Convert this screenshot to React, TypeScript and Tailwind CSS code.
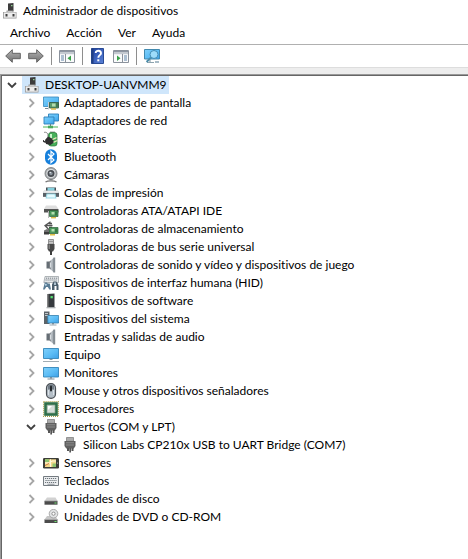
import { useState, type ReactNode } from "react";

function Icon({ children }: { children: ReactNode }) {
  return (
    <svg viewBox="0 0 16 16" className="block size-4 shrink-0" aria-hidden="true">
      {children}
    </svg>
  );
}

function Defs() {
  return (
    <svg className="absolute size-0" aria-hidden="true">
      <defs>
        <linearGradient id="screen" x1="0" y1="0" x2="1" y2="1">
          <stop offset="0" stopColor="#7fd0fb" />
          <stop offset="0.55" stopColor="#5bbcf5" />
          <stop offset="1" stopColor="#3d9fe6" />
        </linearGradient>
        <linearGradient id="arrow" x1="0" y1="0" x2="0" y2="1">
          <stop offset="0" stopColor="#b4b4b4" />
          <stop offset="1" stopColor="#707070" />
        </linearGradient>
        <linearGradient id="metal" x1="0" y1="0" x2="1" y2="0">
          <stop offset="0" stopColor="#5c6268" />
          <stop offset="0.5" stopColor="#c3cad0" />
          <stop offset="1" stopColor="#7b838a" />
        </linearGradient>
        <linearGradient id="help" x1="0" y1="0" x2="1" y2="1">
          <stop offset="0" stopColor="#1c3fa0" />
          <stop offset="1" stopColor="#5c84d8" />
        </linearGradient>
      </defs>
    </svg>
  );
}

const ComputerRoot = () => (
  <Icon>
    <path d="M5 .6L10.500 0v8H5z" fill="#3c3c3c" />
    <path d="M8 2h1.500v1.200H8z" fill="#8fcf8f" />
    <path d="M0 9h3.500V7.500h7V9h3v6.500H0z" fill="#9a9a9a" />
    <path d="M.8 9.500h12v5.200H.8z" fill="#ececec" />
    <path d="M2.500 11h2v2.500h-2zM9.500 11h2v2.500h-2z" fill="#3e3e3e" />
    <path d="M4.500 8h5v1.500h-5z" fill="#c8c8c8" />
  </Icon>
);

const DisplayAdapter = () => (
  <Icon>
    <path d="M.5 2h15v9.500H.5z" fill="url(#screen)" stroke="#3586bb" strokeWidth=".8" />
    <path d="M2 13h4v1H2z" fill="#7b8790" />
    <path d="M6.500 7.500h9v5.500h-9z" fill="#5d9a6c" stroke="#31573b" strokeWidth=".8" />
    <path d="M9 8.500h3.500v3H9z" fill="#b3dcae" />
    <path d="M13.500 8h1v4h-1z" fill="#285c38" />
    <path d="M8 13.300h5v1.400H8z" fill="#d7b43c" />
    <path d="M5.500 7v7.500" stroke="#c8cfd3" />
  </Icon>
);

const NetworkAdapter = () => (
  <Icon>
    <path d="M5.500 1h10v7h-10z" fill="url(#screen)" stroke="#2c80b9" strokeWidth=".9" />
    <path d="M1 4h10v7H1z" fill="url(#screen)" stroke="#2c80b9" strokeWidth=".9" />
    <path d="M7.500 11v2.500" stroke="#6d7f8a" />
    <path d="M0 14h15" stroke="#7fcb86" strokeWidth="1.400" />
    <path d="M5 12.700h5v2.600H5z" fill="#4bab5d" />
  </Icon>
);

const Battery = () => (
  <Icon>
    <path d="M1 1.500c2-1 5 1 3.500 4" fill="none" stroke="#777" strokeWidth=".9" />
    <path d="M7 .3h5v2H7z" fill="#b9bdb9" />
    <rect x="5.500" y="1.500" width="8.500" height="13.500" rx="2.500" fill="#46b05a" stroke="#297238" strokeWidth=".7" />
    <path d="M8 3v5" stroke="#c8f3c8" strokeWidth="2" />
    <path d="M2 9l3-3.500 5 2.500 1 3.500L7.500 14 3 13z" fill="#303030" />
    <path d="M9.500 8.500l4-1.800M10.500 11.300l4-1.800" stroke="#ece8bd" strokeWidth="1.300" />
    <path d="M0 9c0 2 2 2 3 2" fill="none" stroke="#303030" strokeWidth="1.300" />
  </Icon>
);

const Bluetooth = () => (
  <Icon>
    <rect x="2" y=".2" width="12" height="15.600" rx="6" fill="#1680dc" />
    <path d="M5 5l6 6-3 2.700V2.300L11 5l-6 6" fill="none" stroke="#fff" strokeWidth="1.200" />
  </Icon>
);

const Camera = () => (
  <Icon>
    <path d="M2.500 15c2-1.500 9-1.500 11 0" fill="none" stroke="#777" strokeWidth="1.200" />
    <path d="M6.500 12h3v2h-3z" fill="#9a9a9a" />
    <circle cx="8" cy="6.500" r="6" fill="#a9adaf" stroke="#707476" strokeWidth=".8" />
    <circle cx="8" cy="6.500" r="4.500" fill="#dde0e2" />
    <circle cx="8" cy="6.500" r="3.500" fill="#484c52" />
    <circle cx="8" cy="6.500" r="1.700" fill="#8a939c" />
    <circle cx="7.200" cy="5.500" r=".8" fill="#e4e9ed" />
  </Icon>
);

const Printer = () => (
  <Icon>
    <path d="M3 2.500h10V7H3z" fill="#454c52" />
    <path d="M4.500 2.800h7V6h-7z" fill="#86cfdc" />
    <path d="M1 5.500h14l1 2.500v4H0V8z" fill="#c5c9cc" />
    <path d="M0 8h16v3.800H0z" fill="#596066" />
    <path d="M1 6h14l.5 1.700H.5z" fill="#e9ebec" />
    <path d="M3.500 8.500h9l1 5h-11z" fill="#9edae6" />
    <path d="M4.500 9.500h7l.6 3H3.900z" fill="#e6fafd" />
  </Icon>
);

const AtaController = () => (
  <Icon>
    <path d="M3 2.500h10l2.500 3.500H1z" fill="#dedede" />
    <path d="M1 6h14.500v3.500H1z" fill="#545454" />
    <path d="M5.500 8v7" stroke="#bbb" />
    <path d="M6.500 7.500H15v6H6.500z" fill="#4c995d" stroke="#2b5e37" strokeWidth=".7" />
    <path d="M8.500 9h3v2.500h-3z" fill="#b5e0b0" />
    <path d="M13 8.500v4" stroke="#235831" />
    <path d="M8 14h5v1.400H8z" fill="#dabb4a" />
  </Icon>
);

const StorageController = () => (
  <Icon>
    <path d="M7.500.7L2 4.500l4 4.200M3 4.500h6.500M6 2.500h3M6 6.500h3" fill="none" stroke="#555" strokeWidth="1.300" />
    <path d="M1 9.500l3-1.500 3 1.500v3.500H1z" fill="#707070" />
    <path d="M1 11h5v2.500H1z" fill="#3d3d3d" />
    <path d="M6.500 6.500H15v6H6.500z" fill="#4c995d" stroke="#2b5e37" strokeWidth=".7" />
    <path d="M8.500 8h3v2.500h-3z" fill="#b5e0b0" />
    <path d="M13 7.500v4" stroke="#235831" />
    <path d="M7 13h5v1.500H7z" fill="#e0c046" />
  </Icon>
);

const UsbPlug = () => (
  <Icon>
    <path d="M5.500.5h5V5h-5z" fill="#d8d8d8" stroke="#7b7b7b" strokeWidth=".8" />
    <path d="M6.500 1.700h1v1.500h-1zM8.500 1.700h1v1.500h-1z" fill="#555" />
    <path d="M4.500 5h7v5L10 12.500H6L4.500 10z" fill="#484848" />
    <path d="M5.500 5.500H7v4.500H5.500z" fill="#7c7c7c" />
    <path d="M7 12h2v4H7z" fill="#3d3d3d" />
  </Icon>
);

const Speaker = () => (
  <Icon>
    <path d="M3.500 4.500h3.200v7H3.500z" fill="#666e75" />
    <path d="M6.500 4.500L11 .5v15l-4.500-4z" fill="url(#metal)" />
    <path d="M10.500.5h1.700v15h-1.700z" fill="#848c93" />
    <path d="M7.500 5.500v5" stroke="#d7dce0" />
  </Icon>
);

const Hid = () => (
  <Icon>
    <path d="M2 1.500h13.500v6H.8z" fill="#e3e6e8" stroke="#858b90" strokeWidth=".6" />
    <path d="M3 3.200h11.500M2.500 5h12" stroke="#7b8288" strokeDasharray="1.200 .8" />
    <path d="M0 14.500L1.800 7.500h2l1 1h2L8 14.500H6.300L4.800 12H3.200L1.700 14.500z" fill="#5a7c94" />
    <circle cx="2.800" cy="9.800" r="1" fill="#b8d3e4" />
    <path d="M9 15V9.500l1.500-3h3L15.500 10v5h-2v-4h-2v4z" fill="#4a5d6c" />
    <path d="M11 7.500h2V10h-2z" fill="#aec1ce" />
  </Icon>
);

const SoftwareDevice = () => (
  <Icon>
    <path d="M4.500 1l7-.5v14h-7z" fill="#363a3e" />
    <path d="M4.500 1h1.200v13.500H4.500z" fill="#6c6c6c" />
    <path d="M7.500 3h2.300v2.300H7.500z" fill="#55e071" />
    <path d="M3.500 14h9v1.300h-9z" fill="#a9adaf" />
  </Icon>
);

const SystemDevice = () => (
  <Icon>
    <path d="M1 .5h5.500V13H1z" fill="#5b6369" />
    <path d="M2 2.500h3M2 4.500h3" stroke="#c0c8cd" />
    <path d="M4.800 4.500h10.800v7.500H4.800z" fill="url(#screen)" stroke="#337fad" strokeWidth=".8" />
    <path d="M9 12.300h2v1.200H9z" fill="#6a7b86" />
    <path d="M6.500 14h7" stroke="#a9b6be" strokeWidth="1.200" />
  </Icon>
);

const Computer = () => (
  <Icon>
    <path d="M.5 1.500h15v10H.5z" fill="url(#screen)" stroke="#3386b9" strokeWidth=".9" />
    <path d="M6.500 12h3v1h-3z" fill="#8b9aa3" />
    <path d="M0 14.500h16" stroke="#a2adb3" />
  </Icon>
);

const Monitor = () => (
  <Icon>
    <path d="M.5 2.500h15v9.500H.5z" fill="url(#screen)" stroke="#3386b9" strokeWidth=".9" />
    <path d="M7 12.300h2v1.200H7z" fill="#6d7e88" />
    <path d="M4.500 14h7" stroke="#7e8d96" />
  </Icon>
);

const Mouse = () => (
  <Icon>
    <rect x="3.500" y=".6" width="9" height="14.800" rx="4.400" fill="#b4bec7" stroke="#4b5056" strokeWidth="1.200" />
    <path d="M5 2.500c1-1 5-1 6 0v4H5z" fill="#727c86" />
    <path d="M5.500 7v5M10.500 7v5" stroke="#dbe2e8" />
    <rect x="7" y="2.500" width="2" height="6" rx="1" fill="#25292d" />
  </Icon>
);

const Cpu = () => (
  <Icon>
    <path d="M.6.6h14.800v14.800H.6z" fill="none" stroke="#a89d48" strokeWidth="1.200" strokeDasharray="1 1" />
    <path d="M1.200 1.200h13.600v13.600H1.200z" fill="#2f704a" />
    <path d="M4 4h8v8H4z" fill="#d5ddd8" stroke="#84a18e" strokeWidth=".7" />
    <path d="M5 5h4L5 9z" fill="#fff" />
  </Icon>
);

const Port = () => (
  <Icon>
    <path d="M4.500.5h7V4h-7z" fill="#d0d0d0" stroke="#707070" strokeWidth=".7" />
    <path d="M6 1v2.500M8 1v2.500M10 1v2.500" stroke="#777" strokeWidth=".8" />
    <path d="M2.500 4h11v5l-1.700 2.500H4.200L2.500 9z" fill="#606060" />
    <path d="M4 5.800h8M4 8h8" stroke="#9a9a9a" strokeWidth=".8" />
    <path d="M5 11h2v3H5zM7.300 11H9v4.500H7.300zM9.500 11h2v3h-2z" fill="#555" />
  </Icon>
);

const Sensor = () => (
  <Icon>
    <rect y="3" width="16" height="10.500" rx="1.200" fill="#3c3d38" />
    <path d="M2 4.300h11V12H2z" fill="#f3d98b" />
    <path d="M2 4.300h4V7H2zM9.500 8.500H13V12H9.500z" fill="#8dc36e" />
    <path d="M2 8h5l2-2h4M7.500 4.300V12" fill="none" stroke="#fff9df" />
    <path d="M2 10.500l4-2" stroke="#d07b43" />
    <circle cx="14.500" cy="8" r=".6" fill="#ccc" />
  </Icon>
);

const Keyboard = () => (
  <Icon>
    <path d="M.5 3.500h15v9H.5z" fill="#eceef0" stroke="#747b81" />
    <path d="M2 5.500h12M2.500 7.500h11M2 9.500h12" stroke="#6d757b" strokeDasharray="1.200 .8" />
    <path d="M4.500 11.300h7" stroke="#80878c" strokeWidth=".8" />
  </Icon>
);

const Disk = () => (
  <Icon>
    <path d="M4 6.500h8.500l2 3.500h-13z" fill="#d2d2d2" />
    <path d="M1.500 10h13v3.700h-13z" fill="#4c4c4c" />
    <path d="M1.500 10h13" stroke="#999" strokeWidth=".7" />
    <path d="M11.500 11.500h2v1h-2z" fill="#6ce56c" />
  </Icon>
);

const Optical = () => (
  <Icon>
    <path d="M4 7h8.500l2 3.500h-13z" fill="#c6c6c6" />
    <circle cx="10.500" cy="4.700" r="4.300" fill="#e2e4e5" stroke="#999" strokeWidth=".8" />
    <circle cx="10.500" cy="4.700" r="1.600" fill="#fff" stroke="#888" strokeWidth=".9" />
    <path d="M1.500 10.500h13v3.500h-13z" fill="#4c4c4c" />
    <path d="M1.500 10.500h13" stroke="#aaa" strokeWidth=".8" />
    <path d="M11.500 12h2v1h-2z" fill="#6ce56c" />
  </Icon>
);

const Back = () => (
  <Icon>
    <path d="M.7 8l6.600-6.300v3.600h8v5.400h-8v3.600z" fill="url(#arrow)" stroke="#636363" strokeLinejoin="round" />
  </Icon>
);

const Forward = () => (
  <Icon>
    <path d="M15.300 8L8.700 1.700v3.600h-8v5.400h8v3.600z" fill="url(#arrow)" stroke="#636363" strokeLinejoin="round" />
  </Icon>
);

const ConsoleTree = () => (
  <Icon>
    <path d="M.5 2.500h15v12H.5z" fill="#fafbfc" stroke="#8b929c" />
    <path d="M1 3h14v1.500H1z" fill="#8e96a3" />
    <path d="M1 5.700h14" stroke="#b7bdc7" />
    <path d="M6.500 6v8" stroke="#8b929c" />
    <path d="M2 8h3M2 10h3M2 12h3" stroke="#6184a8" />
    <path d="M12 7.500V13L8.500 10.200z" fill="#36a047" />
  </Icon>
);

const ActionPane = () => (
  <Icon>
    <path d="M.5 2.500h15v12H.5z" fill="#fafbfc" stroke="#8b929c" />
    <path d="M1 3h14v1.500H1z" fill="#8e96a3" />
    <path d="M1 5.700h14" stroke="#b7bdc7" />
    <path d="M9.500 6v8" stroke="#8b929c" />
    <path d="M11 8h3M11 10h3M11 12h3" stroke="#6184a8" />
    <path d="M4 7.500V13l3.500-2.800z" fill="#36a047" />
  </Icon>
);

const Help = () => (
  <Icon>
    <path d="M1.500.5h12v15h-12z" fill="url(#help)" stroke="#294b96" />
    <path d="M1.500.5h2v15h-2z" fill="#213f83" />
    <path d="M5.700 5c0-3 5.300-3 5.300.2C11 7.300 8.300 7 8.300 9.800" fill="none" stroke="#fff" strokeWidth="1.900" />
    <path d="M7.300 11.300h2v2h-2z" fill="#fff" />
  </Icon>
);

const Scan = () => (
  <Icon>
    <path d="M.5 1.500h15V11H.5z" fill="url(#screen)" stroke="#4289ae" />
    <path d="M3 14.500h7M6 11.500v3" stroke="#8da3ae" strokeWidth="1.200" />
    <path d="M7 9.500L2.500 14" stroke="#4b8ca9" strokeWidth="1.800" />
    <circle cx="10" cy="6.500" r="4" fill="#a9e2fa" fillOpacity=".85" stroke="#438db5" />
    <path d="M11 14h4" stroke="#8ba5b4" strokeWidth="1.500" />
  </Icon>
);

type Device = { name: string; icon: () => ReactNode; children?: string[] };

const devices: Device[] = [
  { name: "Adaptadores de pantalla", icon: DisplayAdapter },
  { name: "Adaptadores de red", icon: NetworkAdapter },
  { name: "Baterías", icon: Battery },
  { name: "Bluetooth", icon: Bluetooth },
  { name: "Cámaras", icon: Camera },
  { name: "Colas de impresión", icon: Printer },
  { name: "Controladoras ATA/ATAPI IDE", icon: AtaController },
  { name: "Controladoras de almacenamiento", icon: StorageController },
  { name: "Controladoras de bus serie universal", icon: UsbPlug },
  { name: "Controladoras de sonido y vídeo y dispositivos de juego", icon: Speaker },
  { name: "Dispositivos de interfaz humana (HID)", icon: Hid },
  { name: "Dispositivos de software", icon: SoftwareDevice },
  { name: "Dispositivos del sistema", icon: SystemDevice },
  { name: "Entradas y salidas de audio", icon: Speaker },
  { name: "Equipo", icon: Computer },
  { name: "Monitores", icon: Monitor },
  { name: "Mouse y otros dispositivos señaladores", icon: Mouse },
  { name: "Procesadores", icon: Cpu },
  { name: "Puertos (COM y LPT)", icon: Port, children: ["Silicon Labs CP210x USB to UART Bridge (COM7)"] },
  { name: "Sensores", icon: Sensor },
  { name: "Teclados", icon: Keyboard },
  { name: "Unidades de disco", icon: Disk },
  { name: "Unidades de DVD o CD-ROM", icon: Optical },
];

function Toggle({ open, name, onClick }: { open: boolean; name: string; onClick: () => void }) {
  return (
    <button
      type="button"
      aria-label={(open ? "Contraer " : "Expandir ") + name}
      onClick={onClick}
      className="flex size-4 shrink-0 items-center justify-center"
    >
      <svg viewBox="0 0 10 10" className="size-[10px]" fill="none" aria-hidden="true">
        {open ? (
          <path d="M1 3l4 4 4-4" stroke="#404040" strokeWidth="1.800" />
        ) : (
          <path d="M3.500 1l4 4-4 4" stroke="#a6a6a6" strokeWidth="1.800" />
        )}
      </svg>
    </button>
  );
}

function DeviceItem({ device }: { device: Device }) {
  const [open, setOpen] = useState(Boolean(device.children));
  const DeviceIcon = device.icon;
  return (
    <li role="treeitem" aria-expanded={open}>
      <div className="flex h-[18px] items-center">
        <Toggle open={open} name={device.name} onClick={() => setOpen(!open)} />
        <span className="ml-1 flex items-center gap-[5px]">
          <DeviceIcon />
          <span>{device.name}</span>
        </span>
      </div>
      {open && device.children && (
        <ul role="group" className="pl-[39px]">
          {device.children.map((child) => (
            <li key={child} role="treeitem" className="flex h-[18px] items-center gap-[5px]">
              <Port />
              <span>{child}</span>
            </li>
          ))}
        </ul>
      )}
    </li>
  );
}

function ToolButton({ label, children }: { label: string; children: ReactNode }) {
  return (
    <button type="button" aria-label={label} className="shrink-0 hover:bg-[#d8eaf9]">
      {children}
    </button>
  );
}

const Separator = () => <span className="h-[18px] w-px bg-[#8e8e8e]" />;

export default function App() {
  const [open, setOpen] = useState(true);
  return (
    <div className="flex min-h-screen flex-col bg-white font-['Lato','Noto_Sans',sans-serif] text-[12px] leading-[18px] text-black [font-variant-ligatures:none]">
      <Defs />
      <header className="flex h-[22px] items-center gap-1 pl-[3px]">
        <ComputerRoot />
        <h1>Administrador de dispositivos</h1>
      </header>
      <nav aria-label="Menú" className="flex h-[22px] items-center gap-4 pl-[10px]">
        <button type="button">Archivo</button>
        <button type="button">Acción</button>
        <button type="button">Ver</button>
        <button type="button">Ayuda</button>
      </nav>
      <div role="toolbar" aria-label="Herramientas" className="flex h-6 items-center gap-[7px] border-y border-t-[#b0b0b0] border-b-[#dddddd] pl-[5px]">
        <ToolButton label="Atrás"><Back /></ToolButton>
        <ToolButton label="Adelante"><Forward /></ToolButton>
        <Separator />
        <ToolButton label="Mostrar u ocultar árbol de consola"><ConsoleTree /></ToolButton>
        <Separator />
        <ToolButton label="Ayuda"><Help /></ToolButton>
        <ToolButton label="Mostrar u ocultar panel de acciones"><ActionPane /></ToolButton>
        <Separator />
        <ToolButton label="Buscar cambios de hardware"><Scan /></ToolButton>
      </div>
      <div className="h-[6px] bg-[#ededed]" />
      <main className="flex flex-1 flex-col border-t border-l border-[#999999]">
        <div className="flex-1 border-t border-l border-[#666666] pl-[2px]">
          <ul role="tree" aria-label="Dispositivos">
            <li role="treeitem" aria-expanded={open}>
              <div className="flex h-[18px] items-center">
                <Toggle open={open} name="DESKTOP-UANVMM9" onClick={() => setOpen(!open)} />
                <span className="ml-[2px] flex h-[18px] items-center gap-1 bg-[#cfe6fb] pr-[2px] pl-[3px]">
                  <ComputerRoot />
                  <span>DESKTOP-UANVMM9</span>
                </span>
              </div>
              {open && (
                <ul role="group" className="pl-[19px]">
                  {devices.map((device) => (
                    <DeviceItem key={device.name} device={device} />
                  ))}
                </ul>
              )}
            </li>
          </ul>
        </div>
      </main>
    </div>
  );
}
